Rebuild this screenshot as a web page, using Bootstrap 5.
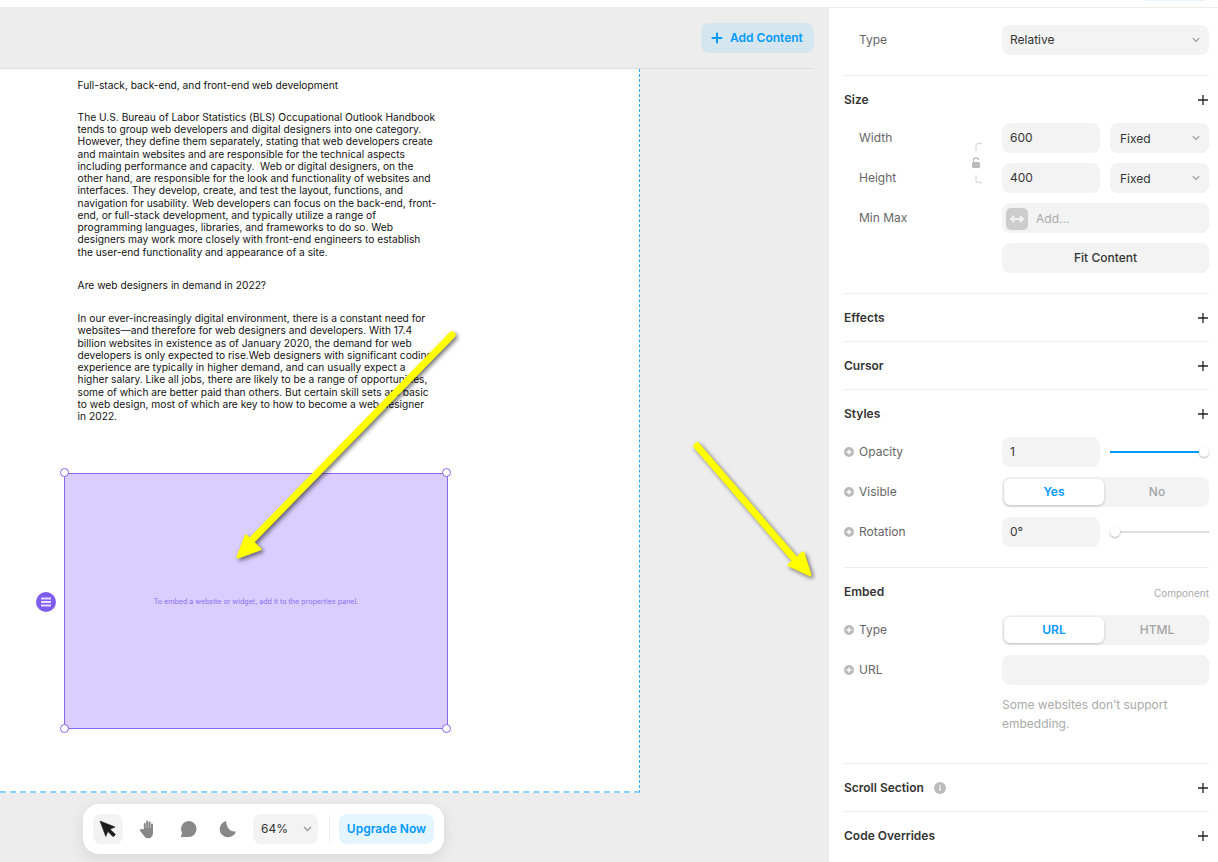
<!DOCTYPE html>
<html lang="en"><head><meta charset="utf-8"><title>Editor</title>
<link href="https://cdn.jsdelivr.net/npm/bootstrap@5.3.0/dist/css/bootstrap.min.css" rel="stylesheet">
<style>
html,body{height:862px;overflow:hidden}
body{font-family:Inter,"Liberation Sans",sans-serif;background:#fff;color:#333;font-size:12px}
.topstrip{height:8px;border-bottom:1px solid #ededed;position:relative}
.topstrip-btn{position:absolute;right:13px;top:0;width:60px;height:1px;background:#e5f5ff}
.workspace{height:854px;overflow:hidden}
.canvas-area{width:829px;flex:none;background:#ededed;position:relative;overflow:hidden}
.canvas-head{height:61px;width:814px;border-bottom:1px solid #ddd;padding-top:15px}
.add-btn{width:113px;height:30px;background:#d6e6ef;border-radius:8px;color:#09f;font-weight:600;font-size:12px;gap:7px;padding-left:10px}
.sheet{width:640px;height:724px;background:#fff;border-right:1px dashed #2aa8f7;border-bottom:2px dashed #8ad2fc;padding:10px 0 0 77.600px;position:relative}
.copy{font-size:10.22px;line-height:12.25px;color:#111;white-space:nowrap;margin-bottom:20.500px}
.copy-a{margin-bottom:19.500px}
.copy-b{margin-bottom:21.500px}
.embed-box{position:absolute;left:64px;top:404px;width:384px;height:256px;background:#d9cefd;border:1px solid #8866ee;color:#8a70f5;font-size:7.140px;padding-top:2px}
.grip{position:absolute;width:9px;height:9px;border-radius:50%;background:#fff;border:1px solid #8866ee}
.grip-tl{left:-5.500px;top:-6px}.grip-tr{right:-3.500px;top:-6px}.grip-bl{left:-5.500px;bottom:-5px}.grip-br{right:-3.500px;bottom:-5px}
.embed-menu{position:absolute;left:36px;top:523px;width:20px;height:20px;border-radius:50%;background:#7f5bf0}
.toolbar{position:absolute;left:83px;top:796px;width:361px;height:50px;background:#fff;border-radius:16px;box-shadow:0 4px 16px rgba(0,0,0,.1);padding:10px}
.tool{width:30px;height:30px;border-radius:8px}
.tool-on{background:#f3f3f3}
.tool-gap{margin-left:10px}
.zoom-pick{width:65px;height:30px;border-radius:8px;background:#f3f3f3;margin-left:10px;padding:0 6px 0 8px;font-weight:400;font-size:12px;color:#333}
.tool-sep{width:1px;height:30px;background:#f0f0f0;margin:0 9px 0 11px}
.upgrade{width:95px;height:30px;border-radius:8px;background:#e5f5ff;color:#09f;font-weight:600;font-size:12px}
.side{width:389px;flex:none;background:#fff;padding:0 9px 0 15px}
.sect{border-bottom:1px solid #ededed;padding-bottom:20px}
.sect-closed{padding-bottom:0}
.sect-first{padding-top:17px}
.sect-head{height:47px;font-weight:600;font-size:12px;color:#333}
.sect-head>svg{margin-right:1px}
.sect-head small{font-size:10px;font-weight:400;color:#aaa;padding-top:3px}
.prop{height:30px;margin-bottom:10px;position:relative}
.prop:last-child{margin-bottom:0}
.prop-name{width:158px;flex:none;color:#666;font-size:12px;padding-left:15px}
.prop-add{position:absolute;left:0;top:10px}
.field,.picker{height:30px;border:0;border-radius:8px;background-color:#f3f3f3;font-size:12px;color:#333;box-shadow:none;padding:0 8px;min-height:0}
.field{padding-bottom:2px}
.field-half{width:98px;flex:none}
.picker{font-weight:400;padding-left:8px;background-position:right 9px center;background-size:8px 6px;line-height:30px;background-image:url("data:image/svg+xml,%3csvg xmlns='http://www.w3.org/2000/svg' viewBox='0 0 8 6'%3e%3cpath d='M.8 1.200 4 4.400l3.200-3.200' fill='none' stroke='%23999' stroke-width='1.200'/%3e%3c/svg%3e")}
.picker-half{width:99px;flex:none;margin-left:10px;padding-left:10px;padding-top:1px}
.picker-full{width:207px;flex:none}
.minmax{width:207px;height:30px;background:#f3f3f3;border-radius:8px;padding:1px 0 0 4px;color:#aaa;gap:8px}
.minmax-ico{width:22px;height:22px;border-radius:5px;background:#ccc}
.fit-btn{width:207px;height:30px;background:#f3f3f3;border-radius:8px;font-weight:500;font-size:12px;color:#333;margin-left:158px}
.seg{width:207px;height:30px;background:#f3f3f3;border-radius:8px;padding:2px;font-weight:500}
.seg span{width:100px;height:26px;line-height:26px;text-align:center;color:#a5a5a5}
.seg span+span{width:103px;padding-left:3px}
.seg .seg-on{background:#fff;color:#09f;font-weight:600;border-radius:6px;box-shadow:0 1px 3px rgba(0,0,0,.22)}
.slide{width:99px;margin-left:10px;height:30px;position:relative}
.slide-track{position:absolute;left:0;right:0;top:14px;height:2px;background:#ddd}
.slide-blue{background:#09f;right:5px}
.slide-knob{position:absolute;top:10px;width:10px;height:10px;border-radius:50%;background:#fff;box-shadow:0 1px 2px rgba(0,0,0,.3)}
.hint{margin:10px 0 30px 158px;color:#aaa;line-height:19px;font-size:12px;white-space:nowrap}
.locker{position:absolute;left:126px;top:19px}
.info-ico{margin-left:7px}
.arrows{position:absolute;left:0;top:0;pointer-events:none;filter:drop-shadow(2px 2px 2px rgba(0,0,0,.55))}
</style></head>
<body>
<div class="topstrip"><div class="topstrip-btn"></div></div>
<div class="workspace d-flex">
  <div class="canvas-area">
    <div class="canvas-head d-flex justify-content-end">
      <div class="add-btn d-flex align-items-center">
        <svg width="12" height="12" viewBox="0 0 12 12"><path d="M6 1.500v9M1.500 6h9" stroke="#09f" stroke-width="2" stroke-linecap="round"/></svg>
        <span>Add Content</span>
      </div>
    </div>
    <div class="sheet">
      <p class="copy copy-a">Full-stack, back-end, and front-end web development</p>
      <p class="copy copy-b">The U.S. Bureau of Labor Statistics (BLS) Occupational Outlook Handbook<br>tends to group web developers and digital designers into one category.<br>However, they define them separately, stating that web developers create<br>and maintain websites and are responsible for the technical aspects<br>including performance and capacity.&nbsp; Web or digital designers, on the<br>other hand, are responsible for the look and functionality of websites and<br>interfaces. They develop, create, and test the layout, functions, and<br>navigation for usability. Web developers can focus on the back-end, front-<br>end, or full-stack development, and typically utilize a range of<br>programming languages, libraries, and frameworks to do so. Web<br>designers may work more closely with front-end engineers to establish<br>the user-end functionality and appearance of a site.</p>
      <p class="copy">Are web designers in demand in 2022?</p>
      <p class="copy">In our ever-increasingly digital environment, there is a constant need for<br>websites—and therefore for web designers and developers. With 17.4<br>billion websites in existence as of January 2020, the demand for web<br>developers is only expected to rise.Web designers with significant coding<br>experience are typically in higher demand, and can usually expect a<br>higher salary. Like all jobs, there are likely to be a range of opportunities,<br>some of which are better paid than others. But certain skill sets are basic<br>to web design, most of which are key to how to become a web designer<br>in 2022.</p>
      <div class="embed-box d-flex align-items-center justify-content-center">
        <span>To embed a website or widget, add it to the properties panel.</span>
        <i class="grip grip-tl"></i><i class="grip grip-tr"></i><i class="grip grip-bl"></i><i class="grip grip-br"></i>
      </div>
      <div class="embed-menu d-flex align-items-center justify-content-center">
        <svg width="12" height="10" viewBox="0 0 12 10"><path d="M1 1.500h10M1 5h10M1 8.500h10" stroke="#e6dfff" stroke-width="1.800"/></svg>
      </div>
    </div>
    <div class="toolbar d-flex align-items-center">
      <div class="tool tool-on d-flex align-items-center justify-content-center">
        <svg width="18" height="18" viewBox="0 0 18 18"><path d="M1 1 16 7l-5 2.200 5.500 5.300-2.300 2.300L8.800 11.400 6.800 16.500z" fill="#1c1c1c" stroke="#1c1c1c" stroke-width=".6" stroke-linejoin="round"/></svg>
      </div>
      <div class="tool tool-gap d-flex align-items-center justify-content-center">
        <svg width="18" height="20" viewBox="0 0 18 20"><path d="M4.800 10V5a1 1 0 0 1 2 0v4h.4V2.500a1 1 0 0 1 2 0V9h.4V3.500a1 1 0 0 1 2 0V9h.4V5.500a1 1 0 0 1 2 0V14c0 3-2 5.300-4.700 5.300-2.300 0-3.600-1-4.800-3L1 11.700c-.6-1.100.9-2.200 1.800-1.200z" fill="#888"/></svg>
      </div>
      <div class="tool tool-gap d-flex align-items-center justify-content-center">
        <svg width="18" height="18" viewBox="0 0 18 18"><path d="M9.500 1a8 8 0 0 1 0 16H1.800l1.300-4A8 8 0 0 1 9.500 1z" fill="#888"/></svg>
      </div>
      <div class="tool tool-gap d-flex align-items-center justify-content-center">
        <svg width="18" height="18" viewBox="0 0 18 18"><path d="M7 1a8.300 8.300 0 1 0 10 10.200C12.500 12.800 7.500 8.500 7 1z" fill="#888"/></svg>
      </div>
      <div class="zoom-pick d-flex align-items-center justify-content-between">
        <span>64%</span>
        <svg width="9" height="6" viewBox="0 0 9 6"><path d="M1 1l3.500 3.500L8 1" fill="none" stroke="#999" stroke-width="1.300"/></svg>
      </div>
      <div class="tool-sep"></div>
      <div class="upgrade d-flex align-items-center justify-content-center">Upgrade Now</div>
    </div>
    <svg class="arrows" width="829" height="854" viewBox="0 8 829 854">
      <g fill="#ff0" stroke="#ff0" stroke-linejoin="round">
        <path d="M452 335 250 542" fill="none" stroke-width="7" stroke-linecap="round"/>
        <path d="M238 557 246 536 260 549z" stroke-width="3"/>
        <path d="M697 446 798 563" fill="none" stroke-width="7" stroke-linecap="round"/>
        <path d="M810 575 789 565 803 553z" stroke-width="3"/>
      </g>
    </svg>
  </div>
  <div class="side">
    <div class="sect sect-first">
      <div class="prop d-flex align-items-center"><div class="prop-name">Type</div><select class="form-select picker picker-full"><option>Relative</option></select></div>
    </div>
    <div class="sect">
      <div class="sect-head d-flex align-items-center justify-content-between"><span>Size</span><svg width="10" height="10" viewBox="0 0 10 10"><path d="M5 0v10M0 5h10" stroke="#222" stroke-width="1.300"/></svg></div>
      <div class="prop d-flex align-items-center"><div class="prop-name">Width</div><input class="form-control field field-half" value="600"><select class="form-select picker picker-half"><option>Fixed</option></select>
        <svg class="locker" width="14" height="42" viewBox="0 0 14 42"><path d="M12 1.500H8a2 2 0 0 0-2 2v5.500M12 40.500H8a2 2 0 0 1-2-2V33" fill="none" stroke="#ddd" stroke-width="1.300"/><path d="M3.500 20v-1.500a2.500 2.500 0 0 1 5-.2" fill="none" stroke="#bbb" stroke-width="1.300"/><rect x="2" y="20" width="8" height="6" rx="1.200" fill="#bbb"/></svg>
      </div>
      <div class="prop d-flex align-items-center"><div class="prop-name">Height</div><input class="form-control field field-half" value="400"><select class="form-select picker picker-half"><option>Fixed</option></select></div>
      <div class="prop d-flex align-items-center"><div class="prop-name">Min Max</div>
        <div class="minmax d-flex align-items-center"><span class="minmax-ico d-flex align-items-center justify-content-center"><svg width="14" height="8" viewBox="0 0 14 8"><path d="M3 4h8M4 1 1 4l3 3M10 1l3 3-3 3" fill="none" stroke="#fff" stroke-width="1.500"/></svg></span><span>Add...</span></div>
      </div>
      <div class="prop d-flex align-items-center"><div class="fit-btn d-flex align-items-center justify-content-center">Fit Content</div></div>
    </div>
    <div class="sect sect-closed"><div class="sect-head d-flex align-items-center justify-content-between"><span>Effects</span><svg width="10" height="10" viewBox="0 0 10 10"><path d="M5 0v10M0 5h10" stroke="#222" stroke-width="1.300"/></svg></div></div>
    <div class="sect sect-closed"><div class="sect-head d-flex align-items-center justify-content-between"><span>Cursor</span><svg width="10" height="10" viewBox="0 0 10 10"><path d="M5 0v10M0 5h10" stroke="#222" stroke-width="1.300"/></svg></div></div>
    <div class="sect">
      <div class="sect-head d-flex align-items-center justify-content-between"><span>Styles</span><svg width="10" height="10" viewBox="0 0 10 10"><path d="M5 0v10M0 5h10" stroke="#222" stroke-width="1.300"/></svg></div>
      <div class="prop d-flex align-items-center"><svg class="prop-add" width="10" height="10" viewBox="0 0 10 10"><circle cx="5" cy="5" r="5" fill="#bbb"/><path d="M5 2.500v5M2.500 5h5" stroke="#fff" stroke-width="1.300"/></svg><div class="prop-name">Opacity</div><input class="form-control field field-half" value="1"><div class="slide"><div class="slide-track slide-blue"></div><div class="slide-knob" style="left:89px"></div></div></div>
      <div class="prop d-flex align-items-center"><svg class="prop-add" width="10" height="10" viewBox="0 0 10 10"><circle cx="5" cy="5" r="5" fill="#bbb"/><path d="M5 2.500v5M2.500 5h5" stroke="#fff" stroke-width="1.300"/></svg><div class="prop-name">Visible</div><div class="seg d-flex"><span class="seg-on">Yes</span><span>No</span></div></div>
      <div class="prop d-flex align-items-center"><svg class="prop-add" width="10" height="10" viewBox="0 0 10 10"><circle cx="5" cy="5" r="5" fill="#bbb"/><path d="M5 2.500v5M2.500 5h5" stroke="#fff" stroke-width="1.300"/></svg><div class="prop-name">Rotation</div><input class="form-control field field-half" value="0°"><div class="slide"><div class="slide-track"></div><div class="slide-knob" style="left:0"></div></div></div>
    </div>
    <div class="sect sect-closed">
      <div class="sect-head d-flex align-items-center justify-content-between"><span>Embed</span><small>Component</small></div>
      <div class="prop d-flex align-items-center"><svg class="prop-add" width="10" height="10" viewBox="0 0 10 10"><circle cx="5" cy="5" r="5" fill="#bbb"/><path d="M5 2.500v5M2.500 5h5" stroke="#fff" stroke-width="1.300"/></svg><div class="prop-name">Type</div><div class="seg d-flex"><span class="seg-on">URL</span><span>HTML</span></div></div>
      <div class="prop d-flex align-items-center"><svg class="prop-add" width="10" height="10" viewBox="0 0 10 10"><circle cx="5" cy="5" r="5" fill="#bbb"/><path d="M5 2.500v5M2.500 5h5" stroke="#fff" stroke-width="1.300"/></svg><div class="prop-name">URL</div><input class="form-control field picker-full" value=""></div>
      <div class="hint">Some websites don’t support<br>embedding.</div>
    </div>
    <div class="sect sect-closed"><div class="sect-head d-flex align-items-center justify-content-between"><span>Scroll Section <svg class="info-ico" width="12" height="12" viewBox="0 0 12 12"><circle cx="6" cy="6" r="6" fill="#bbb"/><path d="M6 5.200v3.600M6 3v1.300" stroke="#fff" stroke-width="1.400"/></svg></span><svg width="10" height="10" viewBox="0 0 10 10"><path d="M5 0v10M0 5h10" stroke="#222" stroke-width="1.300"/></svg></div></div>
    <div class="sect-head d-flex align-items-center justify-content-between"><span>Code Overrides</span><svg width="10" height="10" viewBox="0 0 10 10"><path d="M5 0v10M0 5h10" stroke="#222" stroke-width="1.300"/></svg></div>
  </div>
</div>
<script src="https://cdn.jsdelivr.net/npm/bootstrap@5.3.0/dist/js/bootstrap.bundle.min.js"></script>
</body></html>
